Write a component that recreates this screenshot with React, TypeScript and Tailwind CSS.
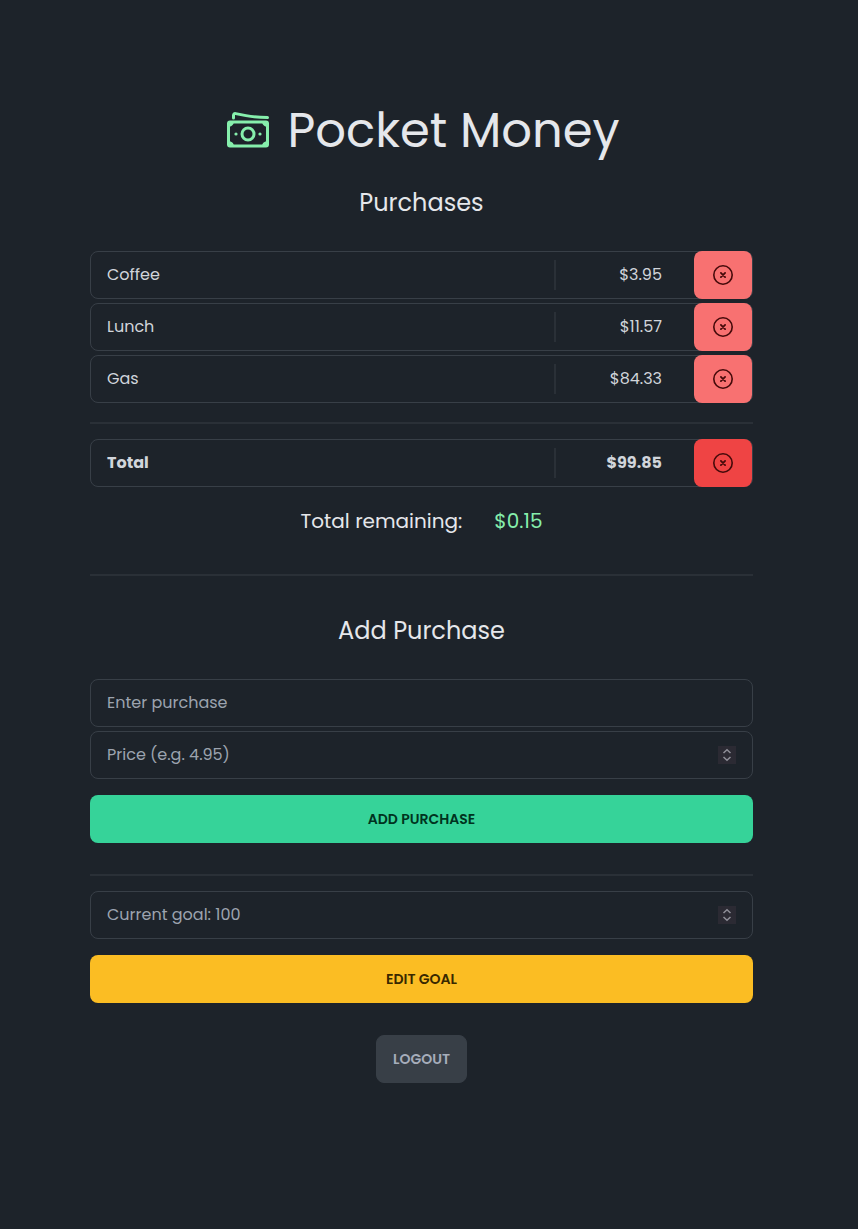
import React, { useState } from "react";

const initialPurchases = [
  { id: 1, name: "Coffee", price: 3.95 },
  { id: 2, name: "Lunch", price: 11.57 },
  { id: 3, name: "Gas", price: 84.33 },
];

function CashIcon() {
  return (
    <svg viewBox="0 1 48 48" className="size-12 shrink-0 text-[#86efac]" fill="none" stroke="currentColor" strokeWidth="3" strokeLinecap="round" strokeLinejoin="round" aria-hidden="true">
      <rect x="4.5" y="16" width="39" height="24" rx="1.5" />
      <path d="M9.500 12V9.400c0-1.500.8-2.100 2.200-1.800L22 9.600c6 1.300 13 1.900 21.500 1.900" />
      <circle cx="24" cy="28" r="6" />
      <path d="M4 15.500h6c0 3-2.400 5.400-6 5.400zM44 15.500h-6c0 3 2.400 5.400 6 5.400zM4 40.500h6c0-3-2.400-5.400-6-5.400zM44 40.500h-6c0-3 2.400-5.400 6-5.400z" fill="currentColor" stroke="none" />
      <circle cx="12" cy="28" r="1.600" fill="currentColor" stroke="none" />
      <circle cx="36" cy="28" r="1.600" fill="currentColor" stroke="none" />
    </svg>
  );
}

function RemoveIcon() {
  return (
    <svg viewBox="0 0 24 24" className="size-6" fill="none" stroke="currentColor" strokeWidth="1.6" strokeLinecap="round" aria-hidden="true">
      <circle cx="12" cy="12" r="9.2" />
      <path d="M9.900 9.900l4.200 4.200M14.100 9.900l-4.200 4.200" strokeWidth="1.800" />
    </svg>
  );
}

function Divider({ className }: { className: string }) {
  return <hr className={`border-0 h-0.5 bg-[#2a3037] ${className}`} />;
}

type RowProps = { name: string; price: number; total?: boolean; onRemove: () => void };

function Row({ name, price, total = false, onRemove }: RowProps) {
  return (
    <div className={`flex h-12 items-center rounded-lg border border-[#383f47] pl-4 text-[#d1d5db] ${total ? "font-bold" : ""}`}>
      <span className="flex-1">{name}</span>
      <span className="h-[30px] w-0.5 bg-[#2a3037]" />
      <span className="w-[106px] text-right">${price.toFixed(2)}</span>
      <button
        type="button"
        aria-label={total ? "Clear all purchases" : `Remove ${name}`}
        onClick={onRemove}
        className={`ml-8 flex h-12 w-[58px] shrink-0 items-center justify-center rounded-lg text-[#450a0a] ${total ? "bg-[#ef4444]" : "bg-[#f87171]"}`}
      >
        <RemoveIcon />
      </button>
    </div>
  );
}

const fieldClass =
  "h-12 w-full rounded-lg border border-[#383f47] bg-transparent px-4 pb-0.5 text-[#d1d5db] outline-none placeholder:text-[#9ca3af]";

function NumberField({ label, placeholder }: { label: string; placeholder: string }) {
  return (
    <div className="relative">
      <input
        type="number"
        step="any"
        aria-label={label}
        placeholder={placeholder}
        className={`${fieldClass} [appearance:textfield] [&::-webkit-inner-spin-button]:appearance-none`}
      />
      <svg viewBox="0 0 18 18" className="pointer-events-none absolute inset-y-0 right-[17px] my-auto size-[18px] bg-[#2b2a33]" fill="none" stroke="#8f8f98" strokeWidth="1.5" aria-hidden="true">
        <path d="M5.500 7L9 3.700L12.500 7M5.500 11L9 14.300L12.500 11" />
      </svg>
    </div>
  );
}

export default function App() {
  const [purchases, setPurchases] = useState(initialPurchases);
  const total = purchases.reduce((sum, p) => sum + p.price, 0);

  return (
    <div className="min-h-screen bg-[#1d232a] pt-24 pr-[105px] pb-36 pl-[90px] font-[Poppins,Inter,sans-serif] text-base text-[#e5e7eb]">
      <main className="mx-auto flex max-w-3xl flex-col">
        <h1 className="flex items-center justify-center gap-4 text-5xl leading-[70px]">
          <CashIcon />
          Pocket Money
        </h1>
        <h2 className="mt-[19px] text-center text-2xl leading-9">Purchases</h2>

        <div className="mt-[30px] flex flex-col gap-1">
          {purchases.map((p) => (
            <Row key={p.id} name={p.name} price={p.price} onRemove={() => setPurchases(purchases.filter((q) => q.id !== p.id))} />
          ))}
        </div>
        <Divider className="mt-[19px] mb-[15px]" />
        <Row name="Total" price={total} total onRemove={() => setPurchases([])} />
        <p className="mt-5 flex justify-center gap-8 text-xl leading-7">
          <span>Total remaining:</span>
          <span className="text-[#86efac]">${(100 - total).toFixed(2)}</span>
        </p>
        <Divider className="mt-[39px] mb-[37px]" />

        <h2 className="text-center text-2xl leading-9">Add Purchase</h2>
        <form className="mt-[30px] flex flex-col" onSubmit={(e) => e.preventDefault()}>
          <input type="text" aria-label="Purchase" placeholder="Enter purchase" className={`${fieldClass} mb-1`} />
          <NumberField label="Price" placeholder="Price (e.g. 4.95)" />
          <button type="submit" className="mt-4 h-12 rounded-lg bg-[#36d399] text-sm font-semibold text-[#003320] uppercase">
            Add Purchase
          </button>
        </form>
        <Divider className="mt-[31px] mb-[15px]" />
        <form className="flex flex-col" onSubmit={(e) => e.preventDefault()}>
          <NumberField label="Goal" placeholder="Current goal: 100" />
          <button type="submit" className="mt-4 h-12 rounded-lg bg-[#fbbd23] text-sm font-semibold text-[#382800] uppercase">
            Edit Goal
          </button>
        </form>
        <button type="button" className="mt-8 h-12 self-center rounded-lg border border-[#383f47] bg-[#383f47] px-4 text-sm font-semibold text-[#a6adbb] uppercase">
          Logout
        </button>
      </main>
    </div>
  );
}
